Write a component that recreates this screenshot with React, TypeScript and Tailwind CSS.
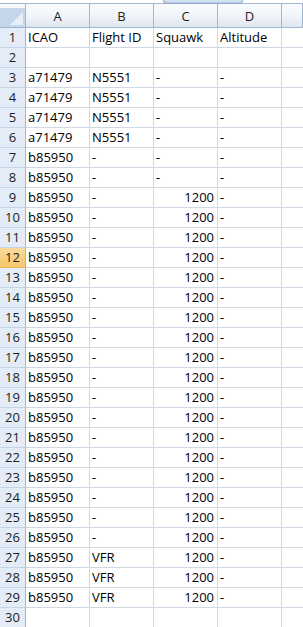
import React from "react";

type Row = [string, string, string, string];

const rows: Row[] = [
  ["ICAO", "Flight ID", "Squawk", "Altitude"],
  ["", "", "", ""],
  ["a71479", "N5551", "-", "-"],
  ["a71479", "N5551", "-", "-"],
  ["a71479", "N5551", "-", "-"],
  ["a71479", "N5551", "-", "-"],
  ["b85950", "-", "-", "-"],
  ["b85950", "-", "-", "-"],
  ...Array.from({ length: 18 }, () => ["b85950", "-", "1200", "-"] as Row),
  ["b85950", "VFR", "1200", "-"],
  ["b85950", "VFR", "1200", "-"],
  ["b85950", "VFR", "1200", "-"],
  ["", "", "", ""],
];

const cell =
  "h-[20px] border-r border-b border-[#d0d7e5] px-[2px] text-[13px] leading-[19px] text-black whitespace-nowrap overflow-hidden";

export default function App() {
  return (
    <div className="w-[303px] h-[627px] overflow-hidden bg-white font-['Open_Sans',sans-serif]">
      <div className="h-[4px] border-b border-[#a3b7cc] bg-white">
        <div className="ml-[163px] w-[80px] h-[4px] rounded-b-[5px] border border-t-0 border-[#8ea9c9] bg-gradient-to-b from-[#dbe7f5] to-[#b9cde6]" />
      </div>
      <div className="grid grid-cols-[26px_64px_64px_64px_64px_1fr]">
        {/* header row */}
        <div className="h-[24px] border-r border-b border-[#9eb6ce] flex flex-col justify-end bg-gradient-to-b from-[#f8fafd] to-[#e3e9f2]">
          <div className="h-[19px] bg-[#c6d6ea] flex items-end justify-end p-[2px]">
            <div className="w-0 h-0 border-l-[13px] border-l-transparent border-b-[13px] border-b-[#e6eef8]" />
          </div>
        </div>
        {["A", "B", "C", "D", ""].map((l, i) => (
          <div
            key={i}
            className="h-[24px] border-r border-b border-[#9eb6ce] flex items-end justify-center pb-[2px] text-[13px] leading-[18px] text-[#222] bg-gradient-to-b from-[#fafcfe] via-[#f1f5fa] to-[#dfe6ef]"
          >
            {l}
          </div>
        ))}
        {rows.map((r, ri) => {
          const n = ri + 1;
          const sel = n === 12;
          return (
            <React.Fragment key={ri}>
              <div
                className={
                  "h-[20px] border-r border-b border-r-[#9eb6ce] flex items-center justify-center text-[13px] leading-[19px] text-[#222] " +
                  (sel
                    ? "bg-gradient-to-b from-[#fbdb9c] to-[#f4c66a] border-b-[#e8b85a]"
                    : "bg-[#e4ecf7] border-b-[#c5d3e4]")
                }
              >
                {n}
              </div>
              <div className={cell}>{r[0]}</div>
              <div className={cell}>{r[1]}</div>
              <div className={cell + (r[2] === "1200" ? " text-right pr-[3px]" : "")}>{r[2]}</div>
              <div className={cell}>{r[3]}</div>
              <div className="h-[20px] border-b border-[#d0d7e5]" />
            </React.Fragment>
          );
        })}
      </div>
    </div>
  );
}
